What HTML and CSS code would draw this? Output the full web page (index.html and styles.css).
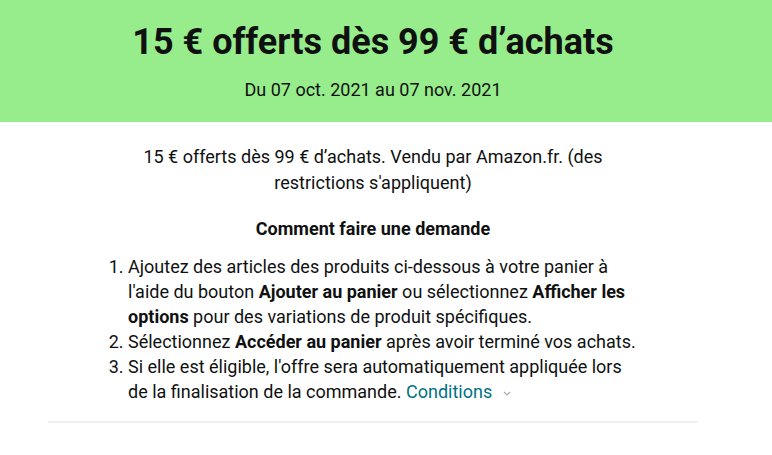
FILE: index.html
```html
<!DOCTYPE html>
<html lang="fr">
<head>
  <meta charset="UTF-8">
  <meta name="viewport" content="width=device-width, initial-scale=1.0">
  <title>15 € offerts dès 99 € d'achats</title>
  <link rel="stylesheet" href="styles.css">
</head>
<body>
  <header class="banner">
    <h1>15 € offerts dès 99 € d’achats</h1>
    <p class="dates">Du 07 oct. 2021 au 07 nov. 2021</p>
  </header>

  <main class="offer">
    <div class="offer-body">
      <p class="summary">15 € offerts dès 99 € d’achats. Vendu par Amazon.fr. (des restrictions s'appliquent)</p>
      <h2>Comment faire une demande</h2>
      <ol class="steps">
        <li>Ajoutez des articles des produits ci-dessous à votre panier à l'aide du bouton <b>Ajouter au panier</b> ou sélectionnez <b>Afficher les options</b> pour des variations de produit spécifiques.</li>
        <li>Sélectionnez <b>Accéder au panier</b> après avoir terminé vos achats.</li>
        <li>Si elle est éligible, l'offre sera automatiquement appliquée lors de la finalisation de la commande. <a href="#" class="terms">Conditions</a><svg class="chevron" width="8" height="5" viewBox="0 0 8 5"><path d="M1 1l3 3 3-3" fill="none" stroke="#a8a8a8" stroke-width="1.1"/></svg></li>
      </ol>
    </div>
  </main>
</body>
</html>
```

FILE: styles.css
```css
body {
  margin: 0;
  font-family: Roboto, "Liberation Sans", sans-serif;
  color: #0f1111;
  background-color: white;
}
.banner {
  background-color: #97ec8b;
  text-align: center;
  padding: 17px 26px 21px 0;
}
.banner h1 {
  margin: 0;
  font-size: 36px;
  font-weight: 700;
  line-height: 50px;
}
.dates {
  margin: 11px 0 0;
  font-size: 18px;
  line-height: 23px;
}
.offer {
  width: 650px;
  margin-left: 48px;
  border-bottom: 2px solid #f0f0f0;
  padding: 22px 0 17px;
}
.offer-body {
  width: 530px;
  margin: 0 auto;
}
.summary {
  margin: 0;
  text-align: center;
  font-size: 18px;
  line-height: 26px;
}
h2 {
  margin: 20px 0 12px;
  text-align: center;
  font-size: 18px;
  font-weight: 700;
  line-height: 26px;
}
.steps {
  margin: 0;
  padding-left: 20px;
  font-size: 18px;
  line-height: 25px;
}
.terms {
  color: #007185;
  text-decoration: none;
}
.chevron {
  margin-left: 11px;
  vertical-align: middle;
}
```
